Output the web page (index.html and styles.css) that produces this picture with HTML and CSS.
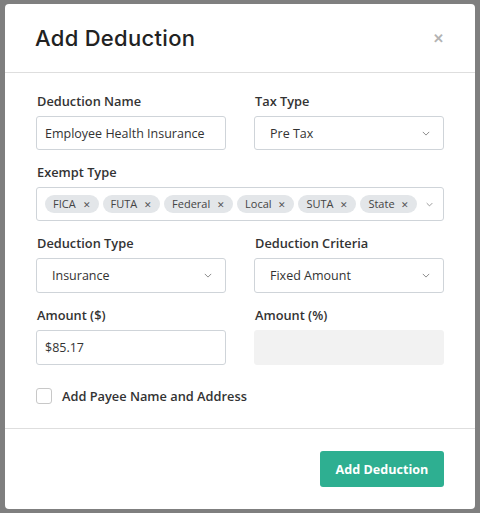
FILE: index.html
```html
<!DOCTYPE html>
<html>
<head>
<meta charset="utf-8">
<link rel="stylesheet" href="styles.css">
</head>
<body>
<div class="backdrop">
  <div class="modal">
    <div class="modal-header">
      <h2 class="title">Add Deduction</h2>
      <span class="close">&#x2715;</span>
    </div>
    <div class="modal-body">
      <div class="row">
        <div class="field">
          <label class="label">Deduction Name</label>
          <div class="input short">Employee Health Insurance</div>
        </div>
        <div class="field">
          <label class="label">Tax Type</label>
          <div class="input select short"><span>Pre Tax</span><svg class="chev" viewBox="0 0 10 6" width="8" height="5"><path d="M1 1l4 4 4-4" fill="none" stroke="#888" stroke-width="1.2"/></svg></div>
        </div>
      </div>
      <div class="field full">
        <label class="label">Exempt Type</label>
        <div class="input multi">
          <div class="chips">
            <span class="chip">FICA <i>&#x2715;</i></span>
            <span class="chip">FUTA <i>&#x2715;</i></span>
            <span class="chip">Federal <i>&#x2715;</i></span>
            <span class="chip">Local <i>&#x2715;</i></span>
            <span class="chip">SUTA <i>&#x2715;</i></span>
            <span class="chip">State <i>&#x2715;</i></span>
          </div>
          <svg class="chev" viewBox="0 0 10 6" width="7" height="5"><path d="M1 1l4 4 4-4" fill="none" stroke="#888" stroke-width="1.2"/></svg>
        </div>
      </div>
      <div class="row">
        <div class="field">
          <label class="label">Deduction Type</label>
          <div class="input select"><span>Insurance</span><svg class="chev" viewBox="0 0 10 6" width="8" height="5"><path d="M1 1l4 4 4-4" fill="none" stroke="#888" stroke-width="1.2"/></svg></div>
        </div>
        <div class="field">
          <label class="label">Deduction Criteria</label>
          <div class="input select"><span>Fixed Amount</span><svg class="chev" viewBox="0 0 10 6" width="8" height="5"><path d="M1 1l4 4 4-4" fill="none" stroke="#888" stroke-width="1.2"/></svg></div>
        </div>
      </div>
      <div class="row">
        <div class="field">
          <label class="label">Amount ($)</label>
          <div class="input">$85.17</div>
        </div>
        <div class="field">
          <label class="label">Amount (%)</label>
          <div class="input disabled"></div>
        </div>
      </div>
      <div class="check-row">
        <span class="checkbox"></span>
        <span class="check-label">Add Payee Name and Address</span>
      </div>
    </div>
    <div class="modal-footer">
      <button class="btn">Add Deduction</button>
    </div>
  </div>
</div>
</body>
</html>
```
FILE: styles.css
```css
* { box-sizing: border-box; }
html, body { margin: 0; padding: 0; }
body {
  width: 480px;
  height: 513px;
  overflow: hidden;
  background: #7f7f7f;
  font-family: "Open Sans", "Noto Sans", sans-serif;
  color: #333;
}
.backdrop {
  padding: 4px 5px 0 5px;
  height: 513px;
}
.modal {
  background: #fff;
  border-radius: 4px;
  height: 505px;
  display: flex;
  flex-direction: column;
}
.modal-header {
  height: 69px;
  border-bottom: 1px solid #dedede;
  display: flex;
  align-items: center;
  justify-content: space-between;
  padding: 0 31px 0 30px;
  flex-shrink: 0;
}
.title {
  margin: 0;
  font-family: "Inter", "Noto Sans", sans-serif;
  font-weight: 500;
  font-size: 22px;
  color: #222;
  letter-spacing: 0.3px;
}
.close {
  color: #b3b3b3;
  font-size: 13px;
  font-weight: 700;
}
.modal-body {
  padding: 19px 31px 0 31px;
  display: flex;
  flex-direction: column;
  flex: 1;
}
.row {
  display: grid;
  grid-template-columns: 190px 190px;
  column-gap: 28px;
}
.field {
  display: flex;
  flex-direction: column;
  margin-bottom: 13px;
}
.label {
  font-size: 12.8px;
  font-weight: 600;
  color: #333;
  line-height: 18px;
  margin-bottom: 6px;
  padding-left: 1px;
}
.input {
  height: 35px;
  border: 1px solid #cfd4d9;
  border-radius: 3px;
  font-size: 12.5px;
  padding: 0 8px;
  display: flex;
  align-items: center;
  color: #333;
}
.short { height: 34px; }
.select {
  justify-content: space-between;
  padding: 0 13px 0 15px;
}
.chev { display: block; }
.disabled {
  background: #f2f2f2;
  border-color: #f2f2f2;
}
.multi {
  height: 34px;
  padding: 0 10px 0 8px;
  justify-content: space-between;
}
.chips {
  display: flex;
  gap: 4px;
}
.chip {
  background: #e3e6e9;
  border-radius: 9px;
  font-size: 11px;
  height: 18px;
  line-height: 18px;
  padding: 0 8px;
  color: #444;
  white-space: nowrap;
}
.chip i {
  font-style: normal;
  font-size: 9px;
  margin-left: 4px;
  color: #555;
}
.check-row {
  display: flex;
  align-items: center;
  gap: 10px;
  margin-top: 9px;
}
.checkbox {
  width: 16px;
  height: 16px;
  border: 1px solid #c8c8c8;
  border-radius: 3px;
}
.check-label {
  font-size: 12.8px;
  font-weight: 600;
}
.modal-footer {
  height: 81px;
  border-top: 1px solid #dedede;
  display: flex;
  justify-content: flex-end;
  align-items: flex-start;
  padding: 22px 31px 0 0;
  flex-shrink: 0;
}
.btn {
  width: 124px;
  height: 36px;
  background: #2eaf91;
  color: #fff;
  border: none;
  border-radius: 3px;
  font-family: "Open Sans", sans-serif;
  font-weight: 700;
  font-size: 12.6px;
}
```
